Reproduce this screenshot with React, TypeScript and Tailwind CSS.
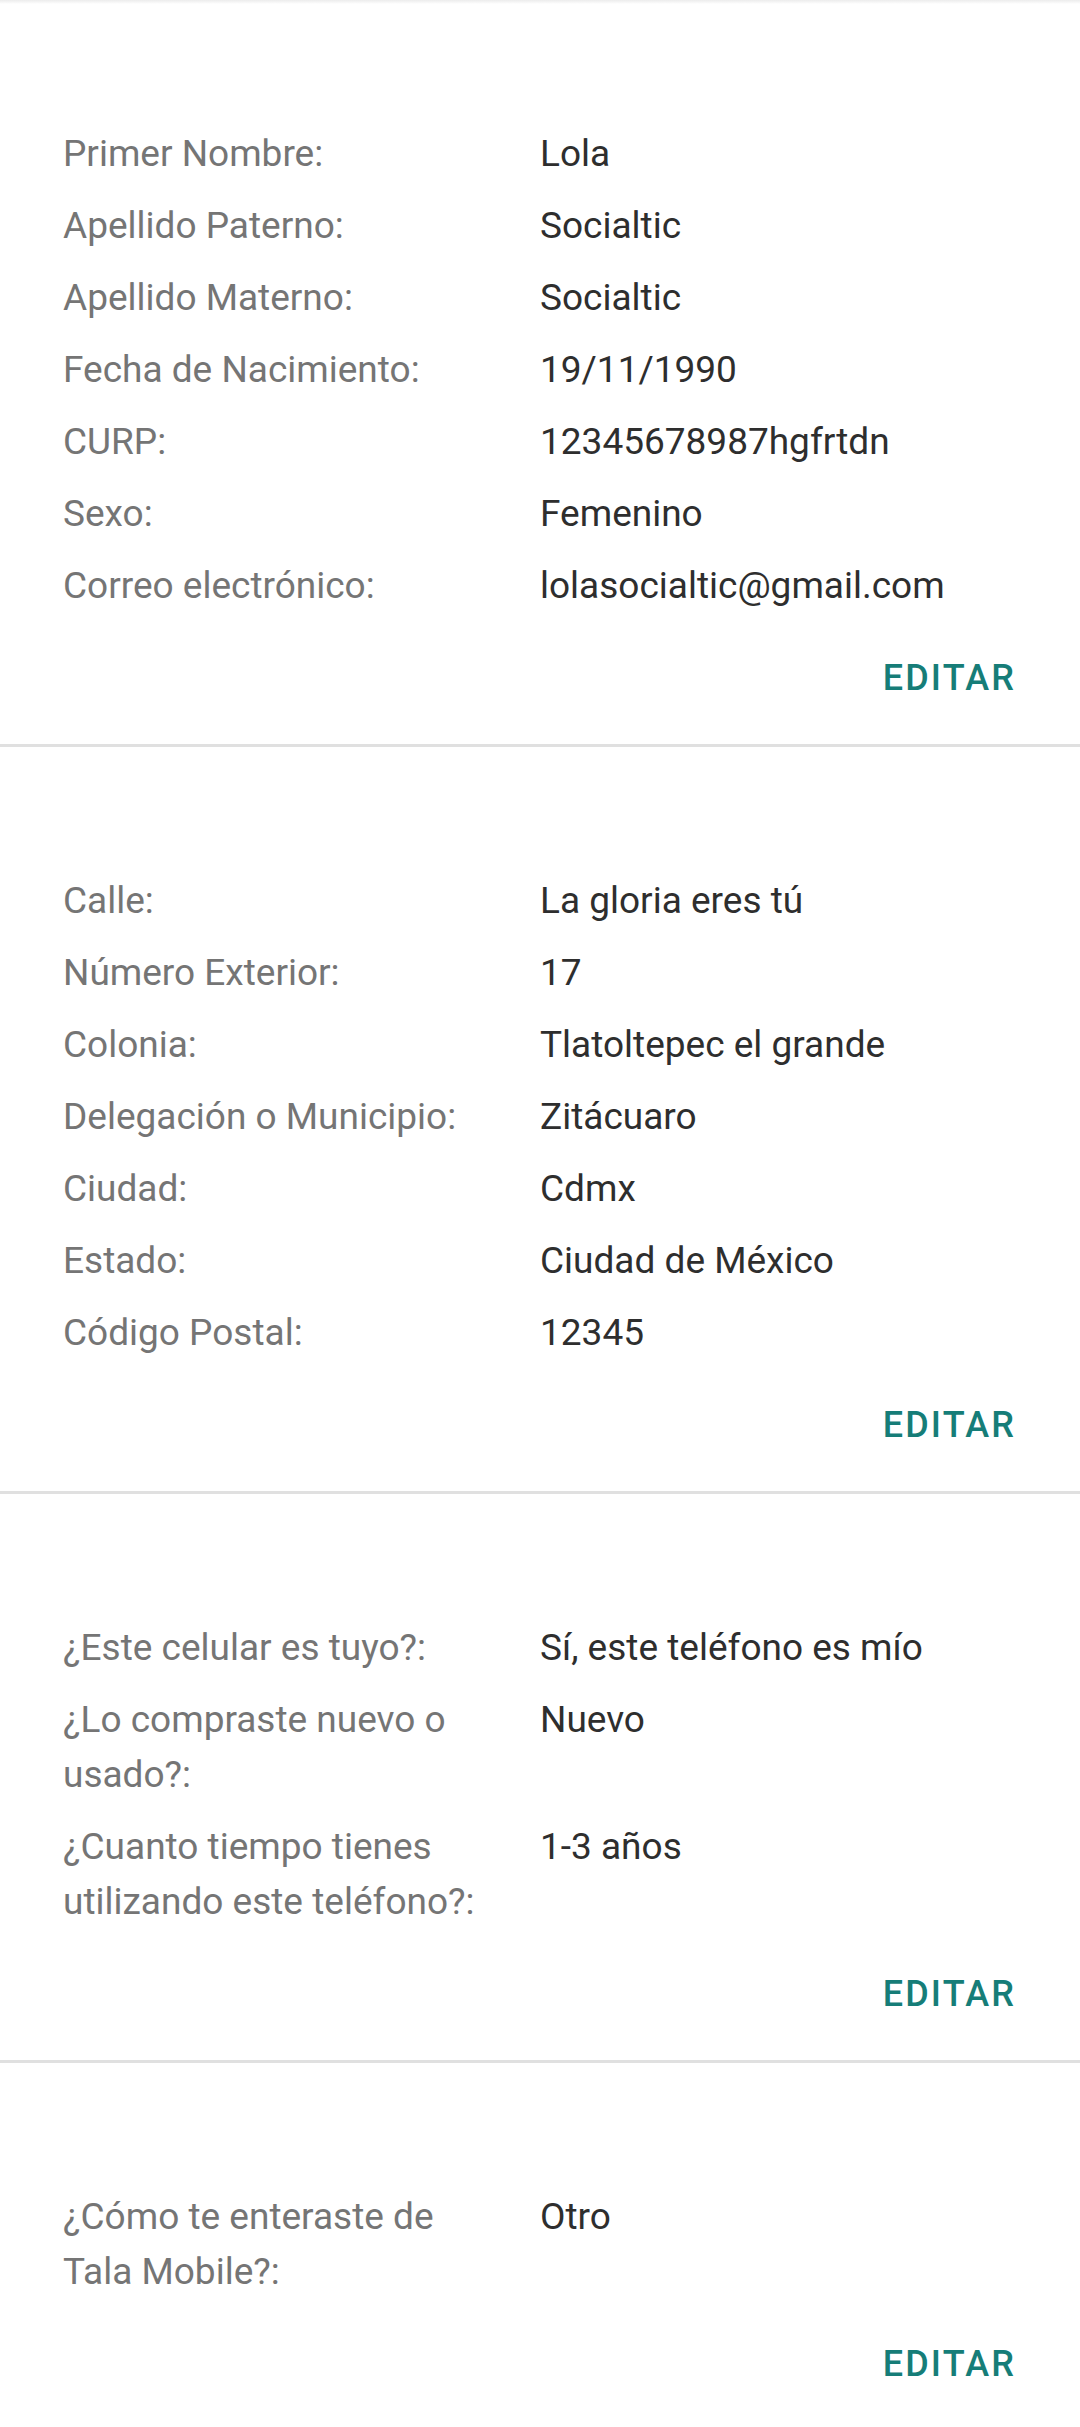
const sections: [string, string][][] = [
  [
    ["Primer Nombre:", "Lola"],
    ["Apellido Paterno:", "Socialtic"],
    ["Apellido Materno:", "Socialtic"],
    ["Fecha de Nacimiento:", "19/11/1990"],
    ["CURP:", "12345678987hgfrtdn"],
    ["Sexo:", "Femenino"],
    ["Correo electrónico:", "lolasocialtic@gmail.com"],
  ],
  [
    ["Calle:", "La gloria eres tú"],
    ["Número Exterior:", "17"],
    ["Colonia:", "Tlatoltepec el grande"],
    ["Delegación o Municipio:", "Zitácuaro"],
    ["Ciudad:", "Cdmx"],
    ["Estado:", "Ciudad de México"],
    ["Código Postal:", "12345"],
  ],
  [
    ["¿Este celular es tuyo?:", "Sí, este teléfono es mío"],
    ["¿Lo compraste nuevo o usado?:", "Nuevo"],
    ["¿Cuanto tiempo tienes utilizando este teléfono?:", "1-3 años"],
  ],
  [["¿Cómo te enteraste de Tala Mobile?:", "Otro"]],
];

function Section({ rows }: { rows: [string, string][] }) {
  return (
    <section className="border-b-[3px] border-[#e0e0e0] pt-[126px] pb-[38px] pl-[63px] pr-[64px]">
      <div className="flex flex-col gap-[17px]">
        {rows.map(([label, value]) => (
          <div key={label} className="flex">
            <div className="w-[477px] shrink-0 pr-[30px] text-[#757575]">{label}</div>
            <div className="flex-1 text-[#2e2e2e]">{value}</div>
          </div>
        ))}
      </div>
      <div className="mt-[38px] flex justify-end">
        <button className="font-medium text-[36px] tracking-[0.06em] text-[#167d78]">EDITAR</button>
      </div>
    </section>
  );
}

export default function App() {
  return (
    <div className="min-h-screen bg-white font-['Roboto',sans-serif] text-[37px] leading-[55px]">
      <div className="h-[4px] bg-gradient-to-b from-[#ececec] to-white" />
      <div className="-mt-[4px]">
        {sections.map((rows, i) => (
          <Section key={i} rows={rows} />
        ))}
      </div>
    </div>
  );
}
